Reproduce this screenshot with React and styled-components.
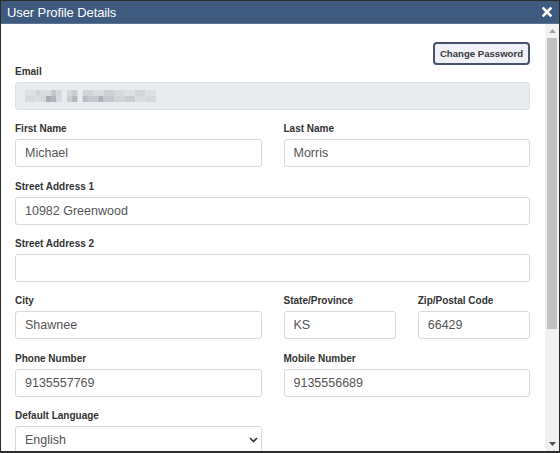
import React from "react";
import styled, { createGlobalStyle } from "styled-components";

const GlobalStyle = createGlobalStyle`
  html, body {
    margin: 0;
    padding: 0;
    background: #fff;
  }
  body {
    font-family: "Liberation Sans", Arial, sans-serif;
  }
  * {
    box-sizing: border-box;
  }
`;

const blurBlocks = [
  [0, 0, 10, "#dcdfe3"], [10, 0, 5, "#cfd3d8"], [15, 0, 10, "#d8dbe0"],
  [25, 0, 5, "#c2c6cc"], [30, 0, 5, "#d4d8dd"],
  [40, 0, 5, "#d3d6db"], [45, 0, 5, "#c9cdd2"],
  [55, 0, 10, "#d0d4d9"], [65, 0, 10, "#d9dce0"], [75, 0, 10, "#cdd1d6"],
  [85, 0, 10, "#d6d9de"], [95, 0, 10, "#dcdfe3"], [105, 0, 10, "#d2d5da"],
  [115, 0, 10, "#dde0e4"],
  [0, 5, 10, "#d6d9de"], [10, 5, 5, "#d9dce0"], [15, 5, 5, "#d4d7dc"],
  [20, 5, 5, "#a9aeb4"], [25, 5, 5, "#b0b5bb"], [30, 5, 5, "#d8dbe0"],
  [40, 5, 5, "#cacdd2"], [45, 5, 5, "#b4b8be"],
  [55, 5, 5, "#b8bcc2"], [60, 5, 10, "#c5c9cf"], [70, 5, 5, "#aeb2b8"],
  [75, 5, 10, "#c4c8ce"], [85, 5, 10, "#d0d3d8"], [95, 5, 10, "#c9cdd2"],
  [105, 5, 10, "#d9dce0"], [115, 5, 10, "#d4d7dc"],
];

function BlurredEmail() {
  return (
    <svg width="131" height="12" viewBox="0 0 125 10" preserveAspectRatio="none">
      {blurBlocks.map(([x, y, w, c], i) => (
        <rect key={i} x={x} y={y} width={w} height={5} fill={c} />
      ))}
    </svg>
  );
}

function App() {
  return (
    <>
      <GlobalStyle />
      <Dialog>
        <TitleBar>
          <Title>User Profile Details</Title>
          <CloseBtn aria-label="close">
            <svg width="10" height="10" viewBox="0 0 10 10">
              <path
                d="M1.5 1.5 L8.5 8.5 M8.5 1.5 L1.5 8.5"
                stroke="#fff"
                strokeWidth="2.6"
                strokeLinecap="square"
              />
            </svg>
          </CloseBtn>
        </TitleBar>
        <Body>
          <Content>
            <Toolbar>
              <Button>Change Password</Button>
            </Toolbar>

            <Group>
              <Label>Email</Label>
              <Input as="div" $disabled>
                <BlurredEmail />
              </Input>
            </Group>

            <Row $cols="1fr 1fr">
              <Group>
                <Label>First Name</Label>
                <Input defaultValue="Michael" />
              </Group>
              <Group>
                <Label>Last Name</Label>
                <Input defaultValue="Morris" />
              </Group>
            </Row>

            <Group>
              <Label>Street Address 1</Label>
              <Input defaultValue="10982 Greenwood" />
            </Group>

            <Group>
              <Label>Street Address 2</Label>
              <Input defaultValue="" />
            </Group>

            <Row $cols="246fr 112fr 112fr">
              <Group>
                <Label>City</Label>
                <Input defaultValue="Shawnee" />
              </Group>
              <Group>
                <Label>State/Province</Label>
                <Input defaultValue="KS" />
              </Group>
              <Group>
                <Label>Zip/Postal Code</Label>
                <Input defaultValue="66429" />
              </Group>
            </Row>

            <Row $cols="1fr 1fr">
              <Group>
                <Label>Phone Number</Label>
                <Input defaultValue="9135557769" />
              </Group>
              <Group>
                <Label>Mobile Number</Label>
                <Input defaultValue="9135556689" />
              </Group>
            </Row>

            <Row $cols="1fr 1fr">
              <Group>
                <Label>Default Language</Label>
                <SelectWrap>
                  <Select defaultValue="English">
                    <option>English</option>
                    <option>Español</option>
                    <option>Français</option>
                  </Select>
                  <Chevron width="9" height="6" viewBox="0 0 9 6">
                    <path
                      d="M1 1 L4.5 4.5 L8 1"
                      fill="none"
                      stroke="#333"
                      strokeWidth="1.6"
                    />
                  </Chevron>
                </SelectWrap>
              </Group>
            </Row>
          </Content>
          <ScrollBar>
            <ScrollArrow>
              <svg width="7" height="4" viewBox="0 0 7 4">
                <path d="M0 4 L3.5 0 L7 4 Z" fill="#a3a3a3" />
              </svg>
            </ScrollArrow>
            <Track>
              <Thumb />
            </Track>
            <ScrollArrow>
              <svg width="7" height="4" viewBox="0 0 7 4">
                <path d="M0 0 L3.5 4 L7 0 Z" fill="#505050" />
              </svg>
            </ScrollArrow>
          </ScrollBar>
        </Body>
      </Dialog>
    </>
  );
}

export default App;

const Dialog = styled.div`
  width: 560px;
  height: 453px;
  border: 1px solid #2b2b2b;
  border-bottom-width: 2px;
  display: flex;
  flex-direction: column;
  overflow: hidden;
  background: #fff;
`;

const TitleBar = styled.div`
  height: 23px;
  flex: none;
  background: #3e5a7f;
  border-bottom: 1px solid #5d7594;
  display: flex;
  align-items: center;
  justify-content: space-between;
  padding: 0 6px 0 6px;
`;

const Title = styled.div`
  color: #fff;
  font-size: 13px;
  letter-spacing: -0.1px;
`;

const CloseBtn = styled.div`
  display: flex;
  align-items: center;
  padding-right: 1px;
`;

const Body = styled.div`
  flex: 1;
  display: flex;
  min-height: 0;
`;

const Content = styled.div`
  flex: 1;
  padding: 18px 15px 0 14px;
  overflow: hidden;
`;

const Toolbar = styled.div`
  display: flex;
  justify-content: flex-end;
`;

const Button = styled.button`
  height: 23px;
  width: 97px;
  padding: 0;
  border: 2px solid #47536a;
  border-radius: 4px;
  background: #eff1f7;
  color: #3a3a3a;
  font-family: "Liberation Sans", Arial, sans-serif;
  font-size: 9.6px;
  font-weight: bold;
  cursor: pointer;
`;

const Row = styled.div`
  display: grid;
  grid-template-columns: ${(p) => p.$cols};
  column-gap: 22px;
`;

const Group = styled.div`
  margin-bottom: 12.33px;
  min-width: 0;
`;

const Label = styled.label`
  display: block;
  height: 12px;
  line-height: 12px;
  margin-bottom: 5px;
  padding-top: 1px;
  font-size: 10px;
  font-weight: bold;
  color: #333;
  white-space: nowrap;
`;

const Input = styled.input`
  display: flex;
  align-items: center;
  width: 100%;
  height: 28px;
  padding: 0 9px;
  border: 1px solid ${(p) => (p.$disabled ? "#dde1e6" : "#d6dadf")};
  border-radius: 3px;
  background: ${(p) => (p.$disabled ? "#e9ecef" : "#fff")};
  color: #555;
  font-family: "Liberation Sans", Arial, sans-serif;
  font-size: 12.5px;
  outline: none;
`;

const SelectWrap = styled.div`
  position: relative;
`;

const Select = styled.select`
  width: 100%;
  height: 28px;
  padding: 0 9px;
  appearance: none;
  border: 1px solid #d6dadf;
  border-radius: 3px;
  background: #fff;
  color: #555;
  font-family: "Liberation Sans", Arial, sans-serif;
  font-size: 12.5px;
  outline: none;
`;

const Chevron = styled.svg`
  position: absolute;
  right: 4px;
  top: 11px;
  pointer-events: none;
`;

const ScrollBar = styled.div`
  width: 14px;
  flex: none;
  background: #f1f1f1;
  display: flex;
  flex-direction: column;
`;

const ScrollArrow = styled.div`
  height: 14px;
  flex: none;
  display: flex;
  align-items: center;
  justify-content: center;
`;

const Track = styled.div`
  flex: 1;
  padding: 0 2px;
`;

const Thumb = styled.div`
  height: 291px;
  background: #c1c1c1;
`;
